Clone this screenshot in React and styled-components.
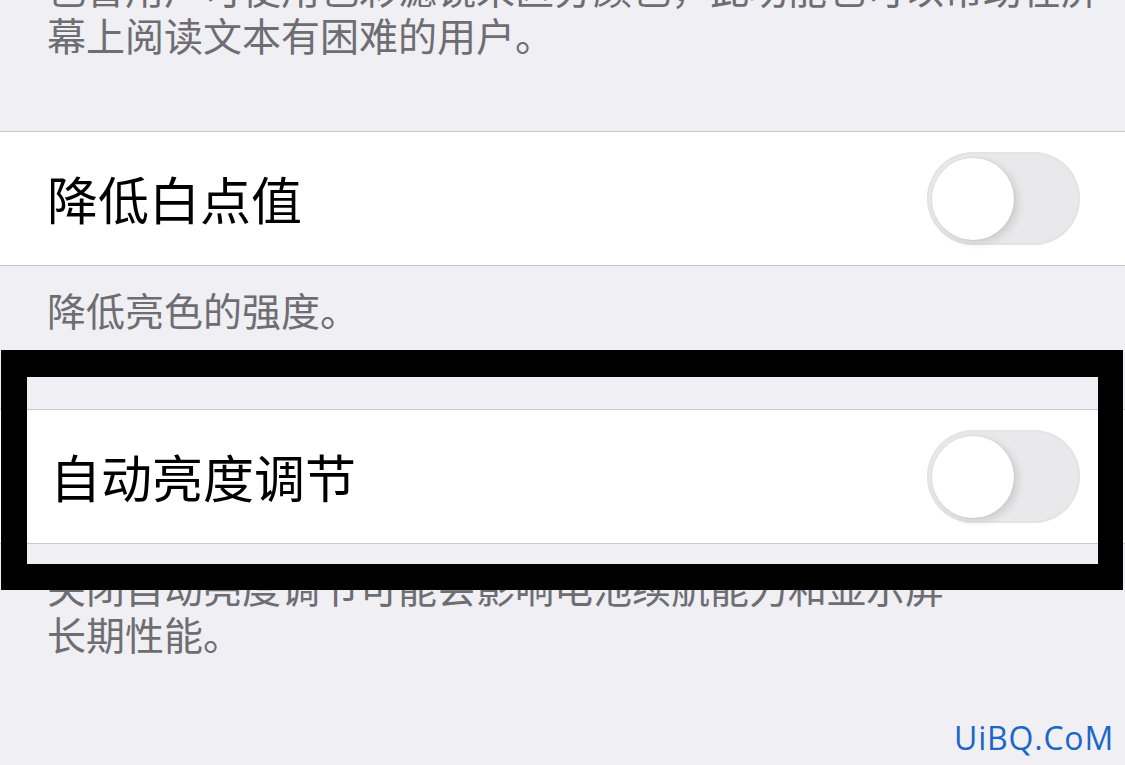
import React from "react"
import styled, { createGlobalStyle } from "styled-components"

const GlobalStyle = createGlobalStyle`
  html, body {
    margin: 0;
    padding: 0;
    background: #efeff4;
    overflow: hidden;
  }
  body {
    font-family: "Noto Sans CJK SC", "Noto Sans", sans-serif;
  }
`

const Screen = styled.div`
  position: relative;
  width: 1125px;
  height: 765px;
  overflow: hidden;
  background: #efeff4;
  display: flex;
  flex-direction: column;
`

const Footer = styled.p`
  margin: ${props => props.$shift || "0"} 0 0;
  padding: ${props => props.$padTop || "0"} 47px 0;
  font-size: 39px;
  line-height: 47px;
  color: #6d6d72;
  white-space: nowrap;
`

const Group = styled.div`
  margin-top: ${props => props.$gap};
  background: #ffffff;
  border-top: 1px solid #c8c7cc;
  border-bottom: 1px solid #c8c7cc;
`

const Row = styled.div`
  height: 133px;
  display: flex;
  align-items: center;
  justify-content: space-between;
  padding: 0 45px 0 47px;
`

const Label = styled.span`
  font-size: 51px;
  line-height: 1;
  color: #000;
  padding-left: ${props => props.$indent || "0"};
`

const Track = styled.span`
  position: relative;
  width: 153px;
  height: 93px;
  border-radius: 47px;
  background: #e9e9eb;
  box-shadow: inset 0 0 0 2px #e4e4e6;
  display: flex;
  align-items: center;
  padding-left: 5px;
  box-sizing: border-box;
`

const Knob = styled.span`
  width: 82px;
  height: 82px;
  border-radius: 50%;
  background: #ffffff;
  box-shadow: 0 0 0 1px rgba(0, 0, 0, 0.04), 4px 3px 8px rgba(0, 0, 0, 0.12);
`

const Frame = styled.div`
  position: absolute;
  left: 1px;
  top: 350px;
  width: 1122px;
  height: 240px;
  box-sizing: border-box;
  border: solid #000;
  border-width: 27px 25px 26px 26px;
  pointer-events: none;
`

const Watermark = styled.div`
  position: absolute;
  right: 11px;
  bottom: 6px;
  font-family: "Open Sans", "Noto Sans", sans-serif;
  font-size: 32px;
  letter-spacing: 0.8px;
  color: #1a67c7;
`

const Switch = () => (
  <Track>
    <Knob />
  </Track>
)

const App = () => (
  <Screen>
    <GlobalStyle />
    <Footer $shift="-36px">
      色盲用户可使用色彩滤镜来区分颜色，此功能也可以帮助在屏
      <br />
      幕上阅读文本有困难的用户。
    </Footer>
    <Group $gap="73px">
      <Row>
        <Label>降低白点值</Label>
        <Switch />
      </Row>
    </Group>
    <Footer $padTop="20px">降低亮色的强度。</Footer>
    <Group $gap="76px">
      <Row>
        <Label $indent="3px">自动亮度调节</Label>
        <Switch />
      </Row>
    </Group>
    <Footer $padTop="19px">
      关闭自动亮度调节可能会影响电池续航能力和显示屏
      <br />
      长期性能。
    </Footer>
    <Frame />
    <Watermark>UiBQ.CoM</Watermark>
  </Screen>
)

export default App
